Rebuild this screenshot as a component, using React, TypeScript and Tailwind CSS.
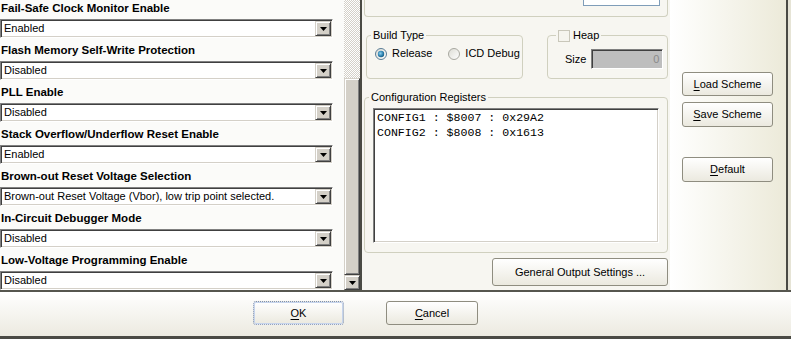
import React from "react";

const rows: [string, string][] = [
  ["Fail-Safe Clock Monitor Enable", "Enabled"],
  ["Flash Memory Self-Write Protection", "Disabled"],
  ["PLL Enable", "Disabled"],
  ["Stack Overflow/Underflow Reset Enable", "Enabled"],
  ["Brown-out Reset Voltage Selection", "Brown-out Reset Voltage (Vbor), low trip point selected."],
  ["In-Circuit Debugger Mode", "Disabled"],
  ["Low-Voltage Programming Enable", "Disabled"],
];

const raised =
  "bg-[#d4d0c8] border border-t-[#d4d0c8] border-l-[#d4d0c8] border-r-[#404040] border-b-[#404040] shadow-[inset_1px_1px_0_#ffffff,inset_-1px_-1px_0_#808080]";

const xpButton =
  "flex items-center justify-center rounded-[3px] border border-[#8f8d80] bg-linear-to-b from-[#ffffff] to-[#ebe9df] text-[11px] text-black";

const DownArrow = () => (
  <svg width="7" height="4" viewBox="0 0 7 4">
    <path d="M0 0h7L3.5 4z" fill="#000" />
  </svg>
);

const Combo = ({ value }: { value: string }) => (
  <div className="flex h-[19px] w-[333px] items-center border border-t-[#808080] border-l-[#808080] border-r-white border-b-[#ffffff] bg-white shadow-[inset_1px_1px_0_#404040,inset_-1px_-1px_0_#d4d0c8]">
    <span className="flex-1 truncate pl-[3px] text-[11px] leading-none">{value}</span>
    <span className={`mr-[1px] flex h-[15px] w-[16px] items-center justify-center ${raised}`}>
      <DownArrow />
    </span>
  </div>
);

const Radio = ({ checked }: { checked?: boolean }) => (
  <svg width="12" height="12" viewBox="0 0 12 12">
    <defs>
      <linearGradient id={checked ? "rg1" : "rg2"} x1="0" y1="0" x2="1" y2="1">
        <stop offset="0" stopColor="#dcdcd4" />
        <stop offset="1" stopColor="#ffffff" />
      </linearGradient>
      <radialGradient id="dot" cx="0.4" cy="0.4" r="0.7">
        <stop offset="0" stopColor="#8ed0ee" />
        <stop offset="0.6" stopColor="#2a7fae" />
        <stop offset="1" stopColor="#14506f" />
      </radialGradient>
    </defs>
    <circle cx="6" cy="6" r="5.5" fill={`url(#${checked ? "rg1" : "rg2"})`} stroke={checked ? "#5a7d96" : "#a8a8a0"} />
    {checked && <circle cx="6" cy="6" r="3.2" fill="url(#dot)" />}
  </svg>
);

const U = ({ c }: { c: string }) => <span className="underline underline-offset-2">{c}</span>;

export default function App() {
  return (
    <div className="flex h-[339px] w-[791px] flex-col overflow-hidden bg-[#ece9d8] font-['Liberation_Sans',Arial,sans-serif] text-black">
      <div className="flex h-[290px]">
        {/* settings list */}
        <div className="flex w-[344px] flex-col bg-[#fbfbf9]">
          {rows.map(([label, value]) => (
            <div key={label} className="mb-[4px] flex flex-col">
              <div className="h-[19px] pl-[1px] text-[11.5px] font-bold leading-[17px]">{label}</div>
              <Combo value={value} />
            </div>
          ))}
        </div>

        {/* scrollbar */}
        <div className="flex w-[18px] flex-col border-r-2 border-[#4a4a44]">
          <div className="h-[78px] bg-[repeating-conic-gradient(#d4d0c8_0%_25%,#ffffff_0%_50%)] bg-[length:2px_2px]" />
          <div className={`flex-1 ${raised}`} />
          <div className={`flex h-[15px] items-center justify-center ${raised}`}>
            <DownArrow />
          </div>
        </div>

        {/* middle panel */}
        <div className="flex w-[308px] flex-col bg-[#f7f6f1] px-[2px] text-[11px]">
          <div className="h-[17px] rounded-b-[4px] border-x border-b border-[#d0d0bf]">
            <div className="ml-[218px] h-[6px] w-[77px] border-x border-b border-[#7f9db9] bg-white" />
          </div>

          <div className="mt-[12px] flex">
            <fieldset className="ml-[2px] h-[50px] w-[157px] rounded-[4px] border border-[#d0d0bf]">
              <legend className="ml-[4px] px-[2px] leading-[13px]">Build Type</legend>
              <div className="mt-[5px] flex h-[13px] items-center pl-[8px]">
                <Radio checked />
                <span className="ml-[5px]">Release</span>
                <span className="ml-[16px]">
                  <Radio />
                </span>
                <span className="ml-[5px]">ICD Debug</span>
              </div>
            </fieldset>
            <fieldset className="ml-[24px] h-[50px] w-[121px] rounded-[4px] border border-[#d0d0bf]">
              <legend className="ml-[8px] flex items-center px-[2px] leading-[13px]">
                <span className="h-[12px] w-[12px] border border-[#c9c7ba] bg-[#f5f4ee]" />
                <span className="ml-[3px]">Heap</span>
              </legend>
              <div className="mt-[7px] flex items-center pl-[17px]">
                <span>Size</span>
                <div className="ml-[5px] flex h-[20px] w-[72px] items-center justify-end border border-t-[#808080] border-l-[#808080] border-r-white border-b-white bg-[#bebebe] pr-[3px] text-[#8a8a8a] shadow-[inset_1px_1px_0_#404040]">
                  0
                </div>
              </div>
            </fieldset>
          </div>

          <fieldset className="mt-[12px] h-[162px] w-[304px] rounded-[4px] border border-[#d0d0bf]">
            <legend className="ml-[4px] px-[2px] leading-[13px]">Configuration Registers</legend>
            <div className="ml-[8px] mt-[4px] h-[135px] w-[286px] border border-t-[#808080] border-l-[#808080] border-r-white border-b-white bg-white pl-[3px] pt-[2px] font-['Liberation_Mono','Courier_New',monospace] text-[11.6px] leading-[14.5px] shadow-[inset_1px_1px_0_#404040,inset_-1px_-1px_0_#d4d0c8]">
              <div>CONFIG1 : $8007 : 0x29A2</div>
              <div>CONFIG2 : $8008 : 0x1613</div>
            </div>
          </fieldset>

          <button className={`ml-[128px] mt-[5px] h-[28px] w-[176px] ${xpButton}`}>General Output Settings ...</button>
        </div>

        {/* right panel */}
        <div className="flex w-[118px] flex-col border-r-2 border-[#4a4a44] bg-linear-to-r from-[#ffffff] to-[#ecead9] pl-[12px] pt-[72px]">
          <button className={`h-[24px] w-[91px] ${xpButton}`}>
            <U c="L" />oad Scheme
          </button>
          <button className={`mt-[6px] h-[25px] w-[91px] ${xpButton}`}>
            <U c="S" />ave Scheme
          </button>
          <button className={`mt-[30px] h-[25px] w-[91px] ${xpButton}`}>
            <U c="D" />efault
          </button>
        </div>
        <div className="flex-1 bg-[#e6e4d6]" />
      </div>

      <div className="h-[2px] bg-[#55554d]" />

      {/* dialog buttons */}
      <div className="flex h-[44px] items-start bg-linear-to-b from-[#ffffff] to-[#eceae0] pl-[253px] pt-[9px]">
        <button className="flex h-[24px] w-[91px] items-center justify-center rounded-[3px] border border-dotted border-[#7d8fb0] bg-linear-to-b from-[#ffffff] to-[#ebe9df] text-[11px] shadow-[inset_0_0_0_1px_#c6d4ec]">
          <U c="O" />K
        </button>
        <button className={`ml-[42px] h-[24px] w-[92px] ${xpButton}`}>
          <U c="C" />ancel
        </button>
      </div>
      <div className="h-[3px] bg-[#4a4a44]" />
    </div>
  );
}
